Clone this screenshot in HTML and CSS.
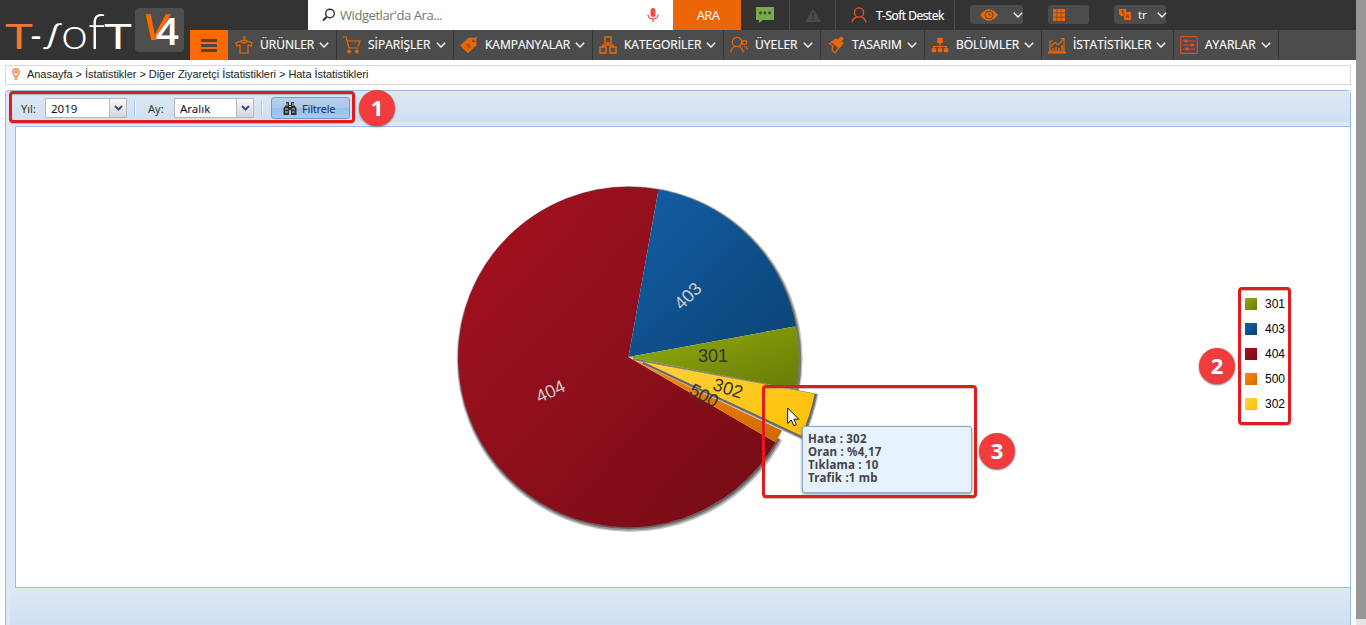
FILE: index.html
```html
<!DOCTYPE html>
<html lang="tr">
<head>
<meta charset="utf-8">
<title>Hata İstatistikleri</title>
<link rel="stylesheet" href="styles.css">
</head>
<body>
<svg width="0" height="0" class="defs"><defs>
<symbol id="chev" viewBox="0 0 10 6"><path d="M.8.8 5 4.9 9.2.8" fill="none" stroke="#fff" stroke-width="1.4"/></symbol>
<linearGradient id="green" x1="0" y1="0" x2="1" y2="1"><stop stop-color="#94ae0a"/><stop offset="1" stop-color="#677a07"/></linearGradient>
<linearGradient id="blue" x1="0" y1="0" x2="1" y2="1"><stop stop-color="#115fa6"/><stop offset="1" stop-color="#0c4274"/></linearGradient>
<linearGradient id="red" x1="0" y1="0" x2="1" y2="1"><stop stop-color="#a61120"/><stop offset="1" stop-color="#740c16"/></linearGradient>
<linearGradient id="orange" x1="0" y1="0" x2="1" y2="1"><stop stop-color="#ff8809"/><stop offset="1" stop-color="#cf6a00"/></linearGradient>
<linearGradient id="yellow" x1="0" y1="0" x2="1" y2="1"><stop stop-color="#ffd13e"/><stop offset="1" stop-color="#fdc102"/></linearGradient>
</defs></svg>
<div class="page">
<header class="header">
  <div class="logo">
    <svg width="190" height="60">
      <rect x="135" y="8" width="49" height="44" rx="4" fill="#4e4e4e"/>
      <g class="wordmark">
        <text x="5" y="49" class="mark-t" textLength="28" lengthAdjust="spacingAndGlyphs">T</text>
        <text x="30" y="48" textLength="12" lengthAdjust="spacingAndGlyphs">-</text>
        <text class="mark-s" transform="translate(46 43) scale(1.3 1) skewX(-14)">ʃ</text>
        <text x="61" y="49" class="mark-o" textLength="27" lengthAdjust="spacingAndGlyphs">o</text>
        <text x="88" y="49" class="mark-f" textLength="17" lengthAdjust="spacingAndGlyphs">f</text>
        <text x="104" y="49" textLength="28" lengthAdjust="spacingAndGlyphs">T</text>
      </g>
      <text class="mark-v" textLength="25" lengthAdjust="spacingAndGlyphs" transform="translate(141 40) skewX(-10)">V</text>
      <text x="156" y="45" class="mark-4" textLength="23" lengthAdjust="spacingAndGlyphs">4</text>
    </svg>
  </div>
  <div class="header-main">
    <div class="topbar">
      <div class="search">
        <svg width="14" height="14" viewBox="0 0 14 14" fill="none" stroke="#333"><circle cx="8" cy="5.5" r="4.3" stroke-width="1.4"/><path d="M4.8 8.8 1 12.5" stroke-width="2"/></svg>
        <span>Widgetlar'da Ara...</span>
        <svg class="mic" width="12" height="17" viewBox="0 0 12 17"><rect x="3.5" y="1" width="5" height="9" rx="2.5" fill="#ef4d4d"/><path d="M1 7.5a5 4.5 0 0 0 10 0M6 12v3" fill="none" stroke="#ef4d4d" stroke-width="1.3"/></svg>
      </div>
      <div class="ara">ARA</div>
      <div class="cell chat"><svg width="18" height="16" viewBox="0 0 18 16"><path d="M0 0h18v13H7l-4 3v-3H0z" fill="#7ba84e"/><g fill="#344a22"><circle cx="4.5" cy="6" r="1.4"/><circle cx="9" cy="6" r="1.4"/><circle cx="13.5" cy="6" r="1.4"/></g></svg></div>
      <div class="cell warn"><svg width="16" height="13" viewBox="0 0 16 13"><path d="M8 0 16 13H0z" fill="#4b4b4b"/><path d="M8 4v4M8 9.5v1.7" stroke="#333" stroke-width="1.7"/></svg></div>
      <div class="cell user"><svg width="16" height="16" viewBox="0 0 16 16" fill="none" stroke="#e9541f" stroke-width="1.3"><circle cx="8" cy="5.5" r="4.6"/><path d="M1 15.5c.4-3 1.6-4.2 4.5-5.6M15 15.5c-.4-3-1.6-4.2-4.5-5.6"/></svg><span>T-Soft Destek</span></div>
      <div class="pill eye"><svg width="18" height="12" viewBox="0 0 18 12"><path d="M0 6Q9-5.5 18 6 9 17.500 0 6z" fill="#ec6608"/><circle cx="9" cy="6" r="4" fill="none" stroke="#4c4c4c"/><path d="M9 3.5V6h2" fill="none" stroke="#4c4c4c"/></svg><svg width="10" height="6"><use href="#chev"/></svg></div>
      <div class="pill gridpill"><svg width="12" height="12" viewBox="0 0 12 12"><path d="M0 0h3.600v3.600H0zM4.200 0h3.600v3.600H4.200zM8.400 0H12v3.600H8.400zM0 4.200h3.600v3.600H0zM4.200 4.200h3.600v3.600H4.200zM8.400 4.200H12v3.600H8.400zM0 8.400h3.600V12H0zM4.200 8.400h3.600V12H4.200zM8.400 8.400H12V12H8.400z" fill="#ec6608"/></svg></div>
      <div class="pill lang"><svg width="12" height="11" viewBox="0 0 12 11"><path d="M0 0h7v3h5v8H5V7H2L0 5z" fill="#ec6608"/><path d="M2 2h3M3.500 1.500v3M5 3.500v3.500M7 9l1.500-4L10 9M7.500 7.500h2" stroke="#733b17" fill="none" stroke-width=".8"/></svg><span>tr</span><svg width="10" height="6"><use href="#chev"/></svg></div>
    </div>
    <nav class="nav">
      <div class="burger"><i></i><i></i><i></i></div>
      <div class="item i1"><svg class="ic" viewBox="0 0 18 18"><path d="M9 4.500V3Q10.800 2.500 10 1.200 9 .2 8 1.500M9 4 1 7l.7 3L5 9v8h8V9l3.300 1L17 7zM6 5.500q3 3 6 0"/></svg><span>ÜRÜNLER</span><svg class="cv"><use href="#chev"/></svg></div>
      <div class="item i2"><svg class="ic" viewBox="0 0 18 18"><path d="M0 1h3l3 11h9M4.500 5H17l-2 5.500"/><circle cx="6" cy="15.500" r="1.300" fill="#ec6608"/><circle cx="14" cy="15.500" r="1.300" fill="#ec6608"/></svg><span>SİPARİŞLER</span><svg class="cv"><use href="#chev"/></svg></div>
      <div class="item i3"><svg class="ic" viewBox="0 0 18 18"><path d="M1 9.500 9 2l6.500.5L16 9l-8 7.500z" fill="#ec6608"/><circle cx="13.500" cy="4.700" r="1.500" fill="#4c4c4c" stroke="none"/><path d="M13.500 4.500 17 1"/><path d="m6 8 5 4m-3.500.5 2-5" stroke="#a34c20"/></svg><span>KAMPANYALAR</span><svg class="cv"><use href="#chev"/></svg></div>
      <div class="item i4"><svg class="ic" viewBox="0 0 18 18"><path d="M6 1h6v6H6zM1 11h6v6H1zM11 11h6v6h-6zM9 7v2M4 11V9h10v2" stroke-width="1.500"/></svg><span>KATEGORİLER</span><svg class="cv"><use href="#chev"/></svg></div>
      <div class="item i5"><svg class="ic" viewBox="0 0 18 18"><circle cx="7" cy="6" r="4.700"/><path d="M.7 16.500c.4-3.500 1.400-4.500 4-6M13.300 16.500c-.4-3.500-1.400-4.500-4-6M14.500 10.500q3 0 3 3"/><circle cx="14.500" cy="6.500" r="2.200"/></svg><span>ÜYELER</span><svg class="cv"><use href="#chev"/></svg></div>
      <div class="item i6"><svg class="ic" viewBox="0 0 18 18"><path d="m2 8 7-5 2 1.500 3-3.500 2 1.500-2.500 3.500L16 7l-4 5-7-6z" fill="#ec6608"/><path d="m3 8 3 2-1 4 3 3 4-6"/></svg><span>TASARIM</span><svg class="cv"><use href="#chev"/></svg></div>
      <div class="item i7"><svg class="ic" viewBox="0 0 18 18"><path d="M9 6v7M3 13v-2.500h12V13"/><path d="M7 2.500h4v4H7zM1.500 13h3v2.500h-3zM7.500 13h3v2.500h-3zM13.500 13h3v2.500h-3z" fill="#ec6608" stroke-width="1.500" stroke-linejoin="round"/></svg><span>BÖLÜMLER</span><svg class="cv"><use href="#chev"/></svg></div>
      <div class="item i8"><svg class="ic" viewBox="0 0 18 18"><path d="M5 5H2v10h14V6M4 11V9l3.500-2.500L10 9l5.500-6M13 2.500h3v3"/><path d="M5 14v-2M8 14v-3M11 14v-2M14 14V9" stroke-width="1.500"/><path d="M0 16.500h18" stroke-width="2"/></svg><span>İSTATİSTİKLER</span><svg class="cv"><use href="#chev"/></svg></div>
      <div class="item i9"><svg class="ic red-ic" viewBox="0 0 18 18"><rect x=".7" y=".7" width="16.600" height="16.600" rx="1"/><path d="M3 5h12M3 9h12M3 13h12"/><path d="M5 4h2v2H5zM11 8h2v2h-2zM6 12h2v2H6z" fill="#ec6608"/></svg><span>AYARLAR</span><svg class="cv"><use href="#chev"/></svg></div>
    </nav>
  </div>
</header>
<div class="crumbs"><svg width="8" height="12" viewBox="0 0 8 12"><path d="M4 .8a3.200 3.200 0 0 1 3.200 3.300C7.200 6 4 9.500 4 9.500S.8 6 .8 4.100A3.200 3.200 0 0 1 4 .8z" fill="#fff" stroke="#f07020" stroke-width="1.200"/><circle cx="4" cy="4" r="1.400" fill="#f07020"/><path d="M2.500 11.300h3" stroke="#f07020"/></svg><span>Anasayfa &gt; İstatistikler &gt; Diğer Ziyaretçi İstatistikleri &gt; Hata İstatistikleri</span></div>
<main class="panel">
  <div class="toolbar">
    <label class="lbl-y">Yıl:</label>
    <div class="combo c-year"><span>2019</span><b><svg width="9" height="6"><path d="M1 1 4.500 4.500 8 1" fill="none" stroke="#34508a" stroke-width="2"/></svg></b></div>
    <i class="sep s1"></i>
    <label class="lbl-m">Ay:</label>
    <div class="combo c-month"><span>Aralık</span><b><svg width="9" height="6"><path d="M1 1 4.500 4.500 8 1" fill="none" stroke="#34508a" stroke-width="2"/></svg></b></div>
    <i class="sep s2"></i>
    <div class="filter"><svg width="14" height="13" viewBox="0 0 14 13"><path d="M3 0h3v3h2V0h3v3l2.500 3v7H8V8H6v5H.5V6L3 3z" fill="#303030"/><path d="M2 7h3M9 7h3M2 10h3M9 10h3M6 4.500h2M4 1v3M10 1v3" stroke="#c2cfdf"/></svg><span>Filtrele</span></div>
  </div>
  <div class="chart">
    <svg width="1334" height="460" viewBox="16 127 1334 460">
      <g fill="none">
        <circle cx="629.700" cy="359" r="170" stroke="#c8c8c8" stroke-width="6"/>
        <circle cx="629.400" cy="358.500" r="170" stroke="#969696" stroke-width="4"/>
        <circle cx="629.100" cy="358" r="170" stroke="#646464" stroke-width="2"/>
      </g>
      <path d="M628.500 357 820 388 800 450z" fill="#fff"/>
      <path d="M628.500 357 775.700 442.300A170.200 170.200 0 1 1 658.500 189.500z" fill="url(#red)"/>
      <path d="M628.500 357 658.500 189.500A170.200 170.200 0 0 1 795.900 326.300z" fill="url(#blue)"/>
      <g fill="none" stroke-linejoin="round">
        <path d="M638 358.700 795.600 389.700" transform="translate(1.200 2)" stroke="#c8c8c8" stroke-width="4"/>
        <path d="M632 357.700 795.600 389.700" transform="translate(.9 1.300)" stroke="#777" stroke-width="2"/>
        <path d="M796 330A171 171 0 0 1 796 390" transform="translate(1 1)" stroke="#777" stroke-width="3"/>
      </g>
      <path d="M628.500 357 795.900 326.300A170.200 170.200 0 0 1 795.600 389.700z" fill="url(#green)"/>
      <path d="M628.500 357 782 430.500A170.200 170.200 0 0 1 775.700 442.300z" fill="url(#orange)"/>
      <g fill="none">
        <path d="M647.500 362.800 814.500 394A170 170 0 0 1 801 435.500z" stroke="#c8c8c8" stroke-width="4.500" transform="translate(1.200 2)"/>
        <path d="M642 360.800 814.500 394A170 170 0 0 1 801 435.500z" stroke="#858585" stroke-width="3.500" transform="translate(.9 1.300)"/>
        <path d="M643 361.800 814.500 394A170 170 0 0 1 801 435.500z" stroke="#646464" stroke-width="2" transform="translate(.6 1)"/>
      </g>
      <path d="M643 361.800 814.600 393.700A170 170 0 0 1 801 435.500z" fill="url(#yellow)"/>
      <g class="slice-label">
        <text x="713" y="362">301</text>
        <text transform="translate(728 388.500) rotate(18)" y="6">302</text>
        <text transform="translate(704 395.500) rotate(28)" y="6">500</text>
        <text class="light" transform="translate(688 296) rotate(-45)" y="6">403</text>
        <text class="light" transform="translate(550.500 391.500) rotate(-25)" y="6">404</text>
      </g>
    </svg>
    <ul class="legend">
      <li><i class="green"></i>301</li><li><i class="blue"></i>403</li><li><i class="red"></i>404</li><li><i class="orange"></i>500</li><li><i class="yellow"></i>302</li>
    </ul>
  </div>
  <div class="bottom"></div>
</main>
</div>
<aside class="scroll"><div class="thumb"></div></aside>
<div class="tip">Hata : 302<br>Oran : %4,17<br>Tıklama : 10<br>Trafik :1 mb</div>
<svg class="cursor" width="13" height="20" viewBox="0 0 13 20"><path d="M.7 1v15.500L4.300 13l2.600 5.800 2.500-1.100-2.600-5.500h5z" fill="#fff" stroke="#111"/></svg>
<div class="frame f1"></div><div class="frame f2"></div><div class="frame f3"></div>
<div class="badge b1">1</div><div class="badge b2">2</div><div class="badge b3">3</div>
</body>
</html>
```
FILE: styles.css
```css
*{box-sizing:border-box}
body{margin:0;height:625px;overflow:hidden;display:flex;background:#fff;position:relative;font-family:"Liberation Sans",Arial,sans-serif}
svg{display:block;flex:none}
.defs{position:absolute}
.page{width:1356px;height:625px;display:flex;flex-direction:column}
.header{height:60px;display:flex;background:#333}
.logo{width:190px}
.wordmark{font-family:Lato,sans-serif;font-weight:400;font-size:34px;fill:#fff}
.mark-t{fill:#f47532}
.mark-s{font-family:"Noto Sans","DejaVu Sans",sans-serif;font-size:26px}
.mark-o{font-size:44px;font-weight:300}
.mark-f{font-size:49px;font-weight:300}
.mark-v{font:600 36px "Open Sans",sans-serif;fill:#ff6a00}
.mark-4{font:600 37px "Open Sans",sans-serif;fill:#fff}
.header-main{flex:1;display:flex;flex-direction:column}
.topbar{height:30px;display:flex;align-items:center;padding-left:118px;font:12px "Open Sans",sans-serif;color:#fff}
.search{width:365px;height:30px;background:#fff;color:#757575;display:flex;align-items:center;padding:0 14px;font-size:13px}
.search span{margin-left:4px;letter-spacing:-.44px}
.search .mic{margin-left:auto}
.ara{width:68px;height:30px;background:#ec6608;display:flex;align-items:center;justify-content:center;padding-left:2px;font-size:13px;letter-spacing:-.6px}
.cell{height:30px;display:flex;align-items:center;border-right:1px solid #4c4c4c}
.chat{width:49px;padding-left:15px}
.warn{width:46px;padding-left:15px}
.user{width:119px;padding-left:15px;gap:9px;font-size:12px;letter-spacing:-.5px;-webkit-text-stroke:.2px #fff;white-space:nowrap}
.pill{height:19px;background:#4c4c4c;border-radius:3px;display:flex;align-items:center;margin-bottom:1px}
.eye{width:53px;margin-left:15px;padding-left:10px;gap:15px}
.gridpill{width:41px;margin-left:25px;padding-left:5px}
.lang{width:52px;margin-left:25px;padding-left:5px;font-size:11.5px}
.lang span{margin:0 10px 0 7px}
.nav{width:1166px;height:30px;background:#4c4c4c;display:flex;font:12px "Open Sans",sans-serif;color:#fff}
.burger{width:38px;background:#ff6a00;display:flex;flex-direction:column;align-items:center;justify-content:center;gap:2px;margin-right:1px}
.burger i{width:16px;height:3px;background:#4b4540}
.item{height:30px;display:flex;align-items:center;border-right:1px solid #333;padding-left:6px;white-space:nowrap}
.ic{width:18px;height:18px;fill:none;stroke:#ec6608;stroke-width:1.2;margin-right:7px}
.red-ic{stroke:#dd4b29}
.item span{flex:none;margin-bottom:1px;-webkit-text-stroke:.15px #fff}
.cv{width:10px;height:6px;margin-left:auto;margin-right:7px}
.i1{width:108px}.i2{width:117px}.i3{width:139px}.i4{width:131px}.i5{width:97px}.i6{width:104px}.i7{width:117px}.i8{width:132px}.i9{width:105px}
.crumbs{margin:5px 5px 0;width:1346px;height:20px;border:1px solid #d8d8d8;display:flex;align-items:center;padding-left:6px;gap:7px;font-size:11px;color:#222;letter-spacing:-.04px;line-height:16px;padding-bottom:2px}
.panel{margin:5px 5px 0;width:1346px;height:535px;border:1px solid #99bbe8;border-bottom:0;border-radius:4px 4px 0 0;background:#dfe8f6;display:flex;flex-direction:column}
.toolbar{height:31px;margin-left:4px;background:linear-gradient(#dde8f4,#cfdff2);display:flex;align-items:center;padding:3px 0 0 11px;font:11px "Noto Sans",sans-serif;color:#333}
.lbl-y{width:24px}
.combo{height:20px;border:1px solid #b5b8c8;background:#fff;display:flex;color:#111;font-size:11.500px;line-height:19px}
.combo span{flex:1;padding-left:5px}
.combo b{width:17px;border-left:1px solid #b5b8c8;background:linear-gradient(#fafafa,#d4d4d4);display:flex;align-items:center;justify-content:center}
.c-year{width:82px}.c-month{width:80px}
.sep{width:2px;height:14px;background:#98c8ff;border-right:1px solid #fff}
.s1{margin:0 12px 0 7px}.s2{margin:0 8px 0 7px}
.lbl-m{width:26px}
.filter{width:79px;height:22px;border:1px solid #6f9cd0;border-radius:3px;background:linear-gradient(#b9cfeb 0,#aac7ea 50%,#93bff0 51%,#a4cbf6 100%);display:flex;align-items:center;gap:5px;padding-left:11px;color:#26364e;letter-spacing:-.2px}
.chart{width:1335px;height:462px;margin:4px 0 0 9px;border:1px solid #99bbe8;border-right:0;background:#fff;display:flex;position:relative}
.bottom{flex:1;margin-left:4px;background:linear-gradient(#dfe8f5,#d0dff1)}
.slice-label{font:18px "Liberation Sans",Arial,sans-serif;fill:#333;text-anchor:middle}
.light{fill:#ccc}
.legend{position:absolute;right:45px;top:164px;width:60px;margin:0;padding:0;list-style:none;font-size:12px;color:#000}
.legend li{height:25px;display:flex;align-items:center;gap:8px}
.legend i{width:12px;height:12px}
.green{background:linear-gradient(135deg,#94ae0a,#677a07)}
.blue{background:linear-gradient(135deg,#115fa6,#0c4274)}
.red{background:linear-gradient(135deg,#a61120,#740c16)}
.orange{background:linear-gradient(135deg,#ff8809,#cf6a00)}
.yellow{background:linear-gradient(135deg,#ffd13e,#fdc102)}
.scroll{width:10px;background:#e5e5e5}
.thumb{height:619px;background:#969696}
.tip{position:absolute;left:802px;top:426px;width:170px;height:67px;border:1px solid #8eaace;border-radius:3px;background:#e8f2ff;padding:5px;font:bold 11.500px/13px "Noto Sans",sans-serif;letter-spacing:.22px;color:#444;box-shadow:0 1px 3px #888}
.cursor{position:absolute;left:787px;top:407px}
.frame{position:absolute;border:3px solid #e11b1e;border-radius:4px;box-shadow:0 1px 1px #8888,inset 0 1px 1px #8888}
.f1{left:9px;top:91px;width:346px;height:32px}
.f2{left:1238px;top:287px;width:53px;height:138px}
.f3{left:762px;top:385px;width:215px;height:113px}
.badge{position:absolute;width:36px;height:36px;border-radius:50%;background:#f23b3d;color:#fff;font:bold 22px/34px "Open Sans",sans-serif;text-align:center;box-shadow:0 1px 2px #777;text-shadow:1px 1px 1px #7777}
.b1{left:359px;top:90px}.b2{left:1199px;top:348px}.b3{left:979px;top:433px}
```
